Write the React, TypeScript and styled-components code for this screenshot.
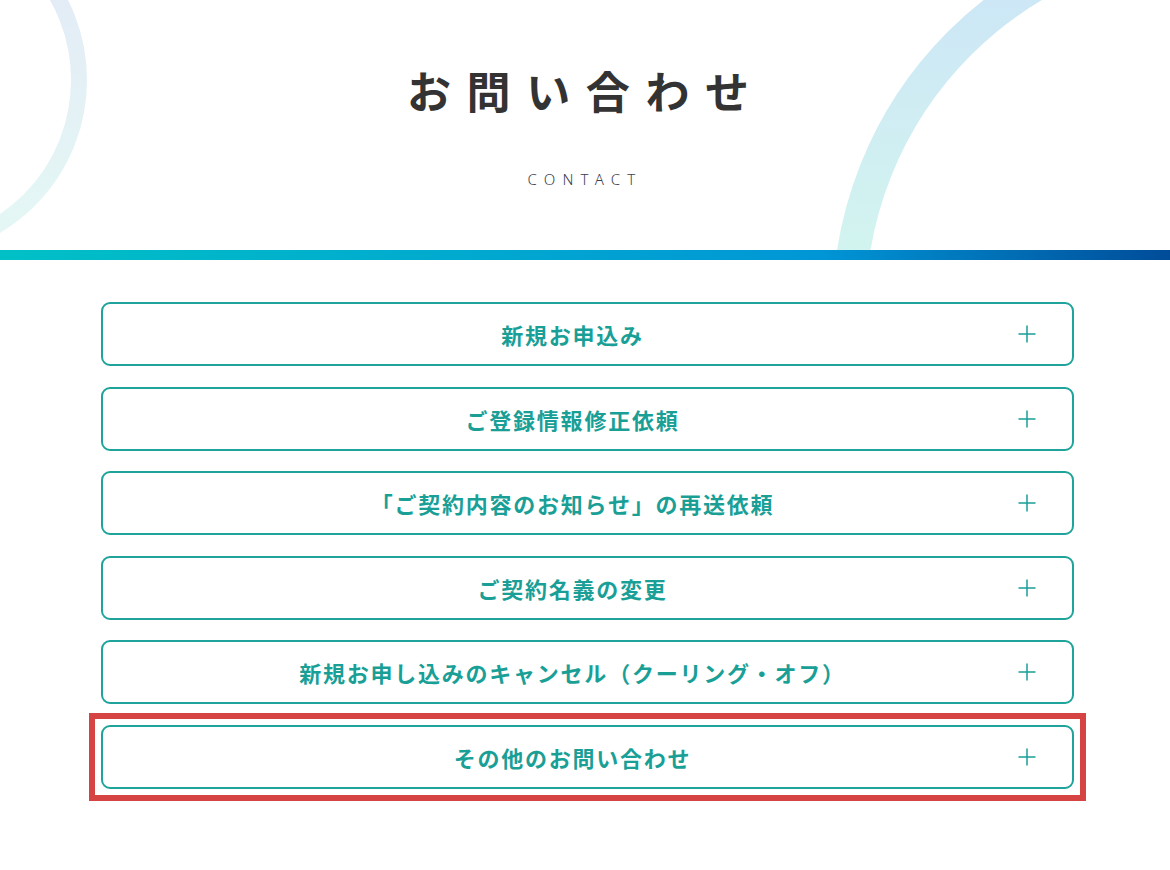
import React from 'react'
import styled, { createGlobalStyle } from 'styled-components'

const GlobalStyle = createGlobalStyle`
  html, body {
    margin: 0;
    padding: 0;
    background: #fff;
  }
  body {
    font-family: 'Noto Sans CJK JP', 'Noto Sans', sans-serif;
    color: #333;
  }
`

const items = [
  '新規お申込み',
  'ご登録情報修正依頼',
  '「ご契約内容のお知らせ」の再送依頼',
  'ご契約名義の変更',
  '新規お申し込みのキャンセル（クーリング・オフ）',
  'その他のお問い合わせ',
]

const App = () => {
  return (
    <>
      <GlobalStyle />
      <Hero>
        <Decor aria-hidden>
          <defs>
            <linearGradient id="ringLeft" x1="0" y1="-90" x2="0" y2="250" gradientUnits="userSpaceOnUse">
              <stop offset="0" stopColor="#e3e8f7" />
              <stop offset="1" stopColor="#e4f8f4" />
            </linearGradient>
            <linearGradient id="ringRight" x1="0" y1="0" x2="0" y2="250" gradientUnits="userSpaceOnUse">
              <stop offset="0" stopColor="#cde7f6" />
              <stop offset="1" stopColor="#d2f4ef" />
            </linearGradient>
          </defs>
          <circle cx={-91} cy={80} r={170} fill="none" stroke="url(#ringLeft)" strokeWidth={16} />
          <circle cx={1226} cy={310} r={377} fill="none" stroke="url(#ringRight)" strokeWidth={33} />
        </Decor>
        <Title>お問い合わせ</Title>
        <SubTitle>CONTACT</SubTitle>
      </Hero>
      <GradientBar />
      <List>
        {items.map((label, i) => (
          <Item key={label} highlighted={i === items.length - 1}>
            <ItemLabel>{label}</ItemLabel>
            <PlusIcon viewBox="0 0 18 18">
              <path d="M9 0.5V17.5M0.5 9H17.5" stroke="currentColor" strokeWidth={1.5} fill="none" />
            </PlusIcon>
          </Item>
        ))}
      </List>
    </>
  )
}

// ヘッダー部分
const Hero = styled.header`
  position: relative;
  height: 250px;
  overflow: hidden;
  display: flex;
  flex-direction: column;
  align-items: center;
`

const Decor = styled.svg`
  position: absolute;
  inset: 0;
  width: 100%;
  height: 100%;
  pointer-events: none;
`

const Title = styled.h1`
  position: relative;
  margin: 0;
  padding-top: 57px;
  font-size: 44px;
  line-height: 66px;
  font-weight: 700;
  letter-spacing: 0.355em;
  padding-left: 0.355em;
  color: #333;
  transform: translateX(-7px);
`

const SubTitle = styled.p`
  position: relative;
  margin: 45px 0 0;
  font-family: 'Noto Sans', sans-serif;
  font-size: 15px;
  line-height: 22px;
  font-weight: 300;
  letter-spacing: 0.48em;
  color: #3d4150;
`

const GradientBar = styled.div`
  height: 10px;
  background: linear-gradient(90deg, #00c0c6 0%, #00a9cf 40%, #0096d6 70%, #004c99 100%);
`

// 問い合わせ項目の一覧
const List = styled.ul`
  list-style: none;
  margin: 42px 0 0;
  padding: 0 0 20px;
  width: 973px;
  margin-left: calc(50% - 484px);
  display: flex;
  flex-direction: column;
  gap: 20.6px;
`

const Item = styled.li<{ highlighted?: boolean }>`
  position: relative;
  box-sizing: border-box;
  height: 64px;
  display: flex;
  align-items: center;
  padding: 0 36px 0 24px;
  border: 2px solid #1fa39b;
  border-radius: 9px;
  background: #fff;
  color: #1a9f97;
  cursor: pointer;

  // 選択中の項目を囲む赤枠
  &::after {
    content: '';
    display: ${({ highlighted }) => (highlighted ? 'block' : 'none')};
    position: absolute;
    inset: -14px;
    border: 6px solid #d54343;
    pointer-events: none;
  }
`

const ItemLabel = styled.span`
  flex: 1;
  text-align: center;
  font-size: 22px;
  font-weight: 700;
  letter-spacing: 0.08em;
`

const PlusIcon = styled.svg`
  width: 18px;
  height: 18px;
  flex-shrink: 0;
`

export default App
